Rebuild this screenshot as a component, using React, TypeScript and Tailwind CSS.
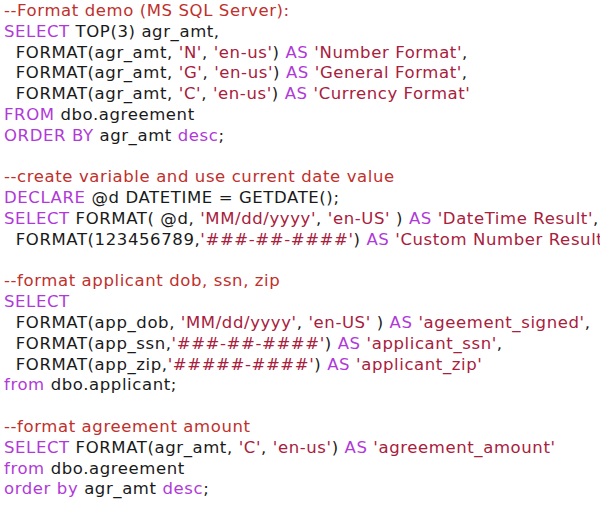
const K = ({ c }: { c: string }) => <span className="text-[#b03ad8]">{c}</span>;
const S = ({ c }: { c: string }) => <span className="text-[#a8203c]">{c}</span>;
const C = ({ c }: { c: string }) => <span className="text-[#c0302c]">{c}</span>;

export default function App() {
  return (
    <div className="w-[600px] h-[511px] bg-white overflow-hidden">
      <pre className="pl-[4px] pt-[1px] text-[16.5px] tracking-[0.6px] leading-[20.8px] text-[#1a1a1a] whitespace-pre" style={{ fontFamily: '"DejaVu Sans", Verdana, sans-serif' }}>
<C c="--Format demo (MS SQL Server):" />{"\n"}
<K c="SELECT" /> TOP(3) agr_amt,{"\n"}
{"  "}FORMAT(agr_amt, <S c="'N'" />, <S c="'en-us'" />) <K c="AS" /> <S c="'Number Format'" />,{"\n"}
{"  "}FORMAT(agr_amt, <S c="'G'" />, <S c="'en-us'" />) <K c="AS" /> <S c="'General Format'" />,{"\n"}
{"  "}FORMAT(agr_amt, <S c="'C'" />, <S c="'en-us'" />) <K c="AS" /> <S c="'Currency Format'" />{"\n"}
<K c="FROM" /> dbo.agreement{"\n"}
<K c="ORDER BY" /> agr_amt <K c="desc" />;{"\n"}
{"\n"}
<C c="--create variable and use current date value" />{"\n"}
<K c="DECLARE" /> @d DATETIME = GETDATE();{"\n"}
<K c="SELECT" /> FORMAT( @d, <S c="'MM/dd/yyyy'" />, <S c="'en-US'" /> ) <K c="AS" /> <S c="'DateTime Result'" />,{"\n"}
{"  "}FORMAT(123456789,<S c="'###-##-####'" />) <K c="AS" /> <S c="'Custom Number Result'" />;{"\n"}
{"\n"}
<C c="--format applicant dob, ssn, zip" />{"\n"}
<K c="SELECT" />{"\n"}
{"  "}FORMAT(app_dob, <S c="'MM/dd/yyyy'" />, <S c="'en-US'" /> ) <K c="AS" /> <S c="'ageement_signed'" />,{"\n"}
{"  "}FORMAT(app_ssn,<S c="'###-##-####'" />) <K c="AS" /> <S c="'applicant_ssn'" />,{"\n"}
{"  "}FORMAT(app_zip,<S c="'#####-####'" />) <K c="AS" /> <S c="'applicant_zip'" />{"\n"}
<K c="from" /> dbo.applicant;{"\n"}
{"\n"}
<C c="--format agreement amount" />{"\n"}
<K c="SELECT" /> FORMAT(agr_amt, <S c="'C'" />, <S c="'en-us'" />) <K c="AS" /> <S c="'agreement_amount'" />{"\n"}
<K c="from" /> dbo.agreement{"\n"}
<K c="order by" /> agr_amt <K c="desc" />;
      </pre>
    </div>
  );
}
